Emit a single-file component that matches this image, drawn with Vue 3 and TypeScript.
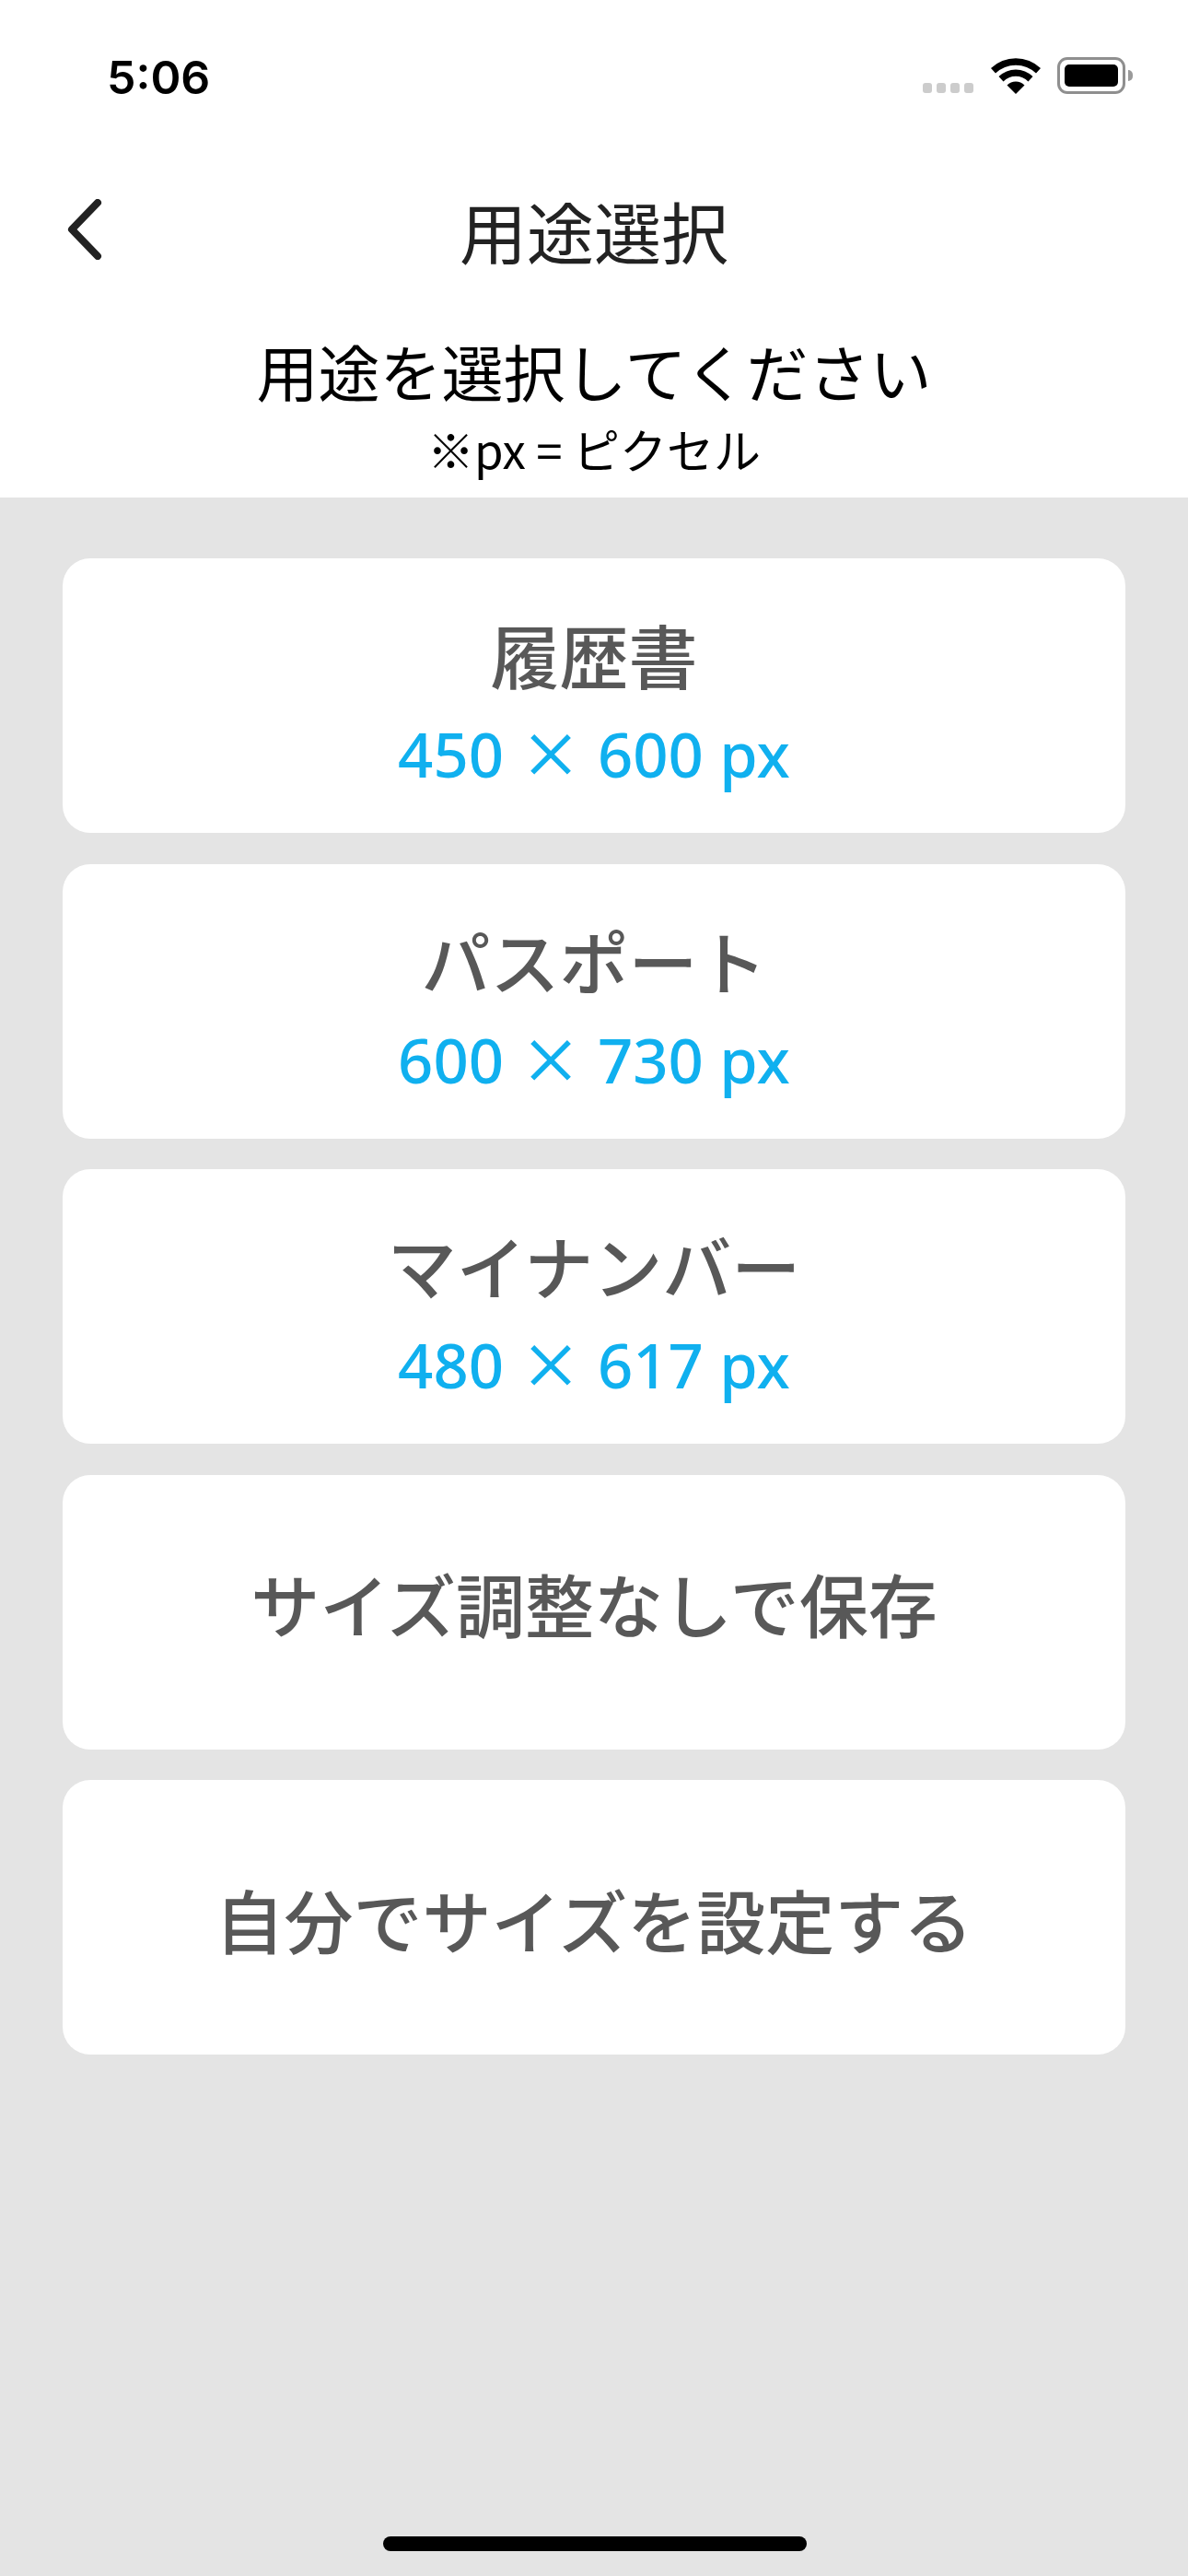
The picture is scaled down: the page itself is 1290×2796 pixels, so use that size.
<script setup lang="ts">
interface Purpose {
  label: string;
  width?: number;
  height?: number;
}

const purposes: Purpose[] = [
  { label: '履歴書', width: 450, height: 600 },
  { label: 'パスポート', width: 600, height: 730 },
  { label: 'マイナンバー', width: 480, height: 617 },
  { label: 'サイズ調整なしで保存' },
  { label: '自分でサイズを設定する' },
];
</script>

<template>
  <div class="screen">
    <header class="status">
      <span class="time">5:06</span>
      <div class="indicators">
        <div class="signal">
          <i v-for="n in 4" :key="n"></i>
        </div>
        <svg class="wifi" width="54" height="40" viewBox="0 0 54 40">
          <path d="M27 40 L17.5 30.5 A13.5 13.5 0 0 1 36.5 30.5 Z" />
          <path d="M13.5 26.5 L8.5 21 A26.5 26.5 0 0 1 45.5 21 L40.5 26.5 A19 19 0 0 0 13.5 26.5 Z" />
          <path d="M5 17.5 L0 12 A39 39 0 0 1 54 12 L49 17.5 A32 32 0 0 0 5 17.5 Z" />
        </svg>
        <div class="battery">
          <div class="battery-fill"></div>
        </div>
        <div class="battery-nub"></div>
      </div>
    </header>

    <nav class="nav">
      <button class="back" type="button" aria-label="戻る">
        <svg width="40" height="66" viewBox="0 0 40 66">
          <path d="M35 4 L7 33 L35 62" />
        </svg>
      </button>
      <h1>用途選択</h1>
    </nav>

    <section class="intro">
      <p class="lead">用途を選択してください</p>
      <p class="note">※px = ピクセル</p>
    </section>

    <main class="list">
      <button
        v-for="item in purposes"
        :key="item.label"
        class="card"
        :class="{ 'has-size': item.width }"
        type="button"
      >
        <span class="label">{{ item.label }}</span>
        <span v-if="item.width" class="size">
          {{ item.width }} <span class="times">×</span> {{ item.height }} px
        </span>
      </button>
    </main>

    <div class="home-bar"></div>
  </div>
</template>

<style>
html,
body {
  margin: 0;
  background: #fff;
}
</style>

<style scoped>
.screen {
  position: relative;
  display: flex;
  flex-direction: column;
  width: 1290px;
  height: 2796px;
  overflow: hidden;
  background: #fff;
  font-family: "Noto Sans CJK JP", "Noto Sans", sans-serif;
}

.status {
  display: flex;
  flex: none;
  justify-content: space-between;
  align-items: flex-start;
  height: 190px;
  padding: 52px 60px 0 116px;
  box-sizing: border-box;
}

.time {
  color: #000;
  font-family: "Inter", "Liberation Sans", sans-serif;
  font-size: 50px;
  font-weight: 600;
  line-height: 64px;
}

.indicators {
  display: flex;
  align-items: flex-start;
  margin-top: 10px;
}

.signal {
  display: flex;
  gap: 5px;
  margin-top: 28px;
  margin-right: 19px;
}

.signal i {
  width: 10px;
  height: 11px;
  border-radius: 3px;
  background: #ccc;
}

.wifi {
  margin-right: 18px;
  fill: #000;
}

.battery {
  width: 74px;
  height: 40px;
  padding: 5px;
  box-sizing: border-box;
  border: 3px solid #8f8f8f;
  border-radius: 11px;
}

.battery-fill {
  width: 100%;
  height: 100%;
  border-radius: 5px;
  background: #000;
}

.battery-nub {
  width: 5px;
  height: 12px;
  margin-top: 14px;
  margin-left: 3px;
  border-radius: 0 6px 6px 0;
  background: #9a9a9a;
}

.nav {
  position: relative;
  display: flex;
  flex: none;
  justify-content: center;
  height: 167px;
}

.back {
  position: absolute;
  top: 26px;
  left: 71px;
  padding: 0;
  border: 0;
  background: none;
}

.back svg {
  display: block;
  fill: none;
  stroke: #222;
  stroke-width: 8;
  stroke-linecap: round;
  stroke-linejoin: round;
}

h1 {
  margin: 0;
  color: #222;
  font-size: 73px;
  font-weight: 400;
  line-height: 100px;
  padding-top: 9px;
}

.intro {
  flex: none;
  height: 183px;
  text-align: center;
  color: #000;
}

.lead {
  margin: 0;
  font-size: 67px;
  line-height: 90px;
}

.note {
  margin: 5px 0 0;
  font-size: 51px;
  line-height: 70px;
}

.list {
  display: flex;
  flex: 1;
  flex-direction: column;
  gap: 33.5px;
  padding: 66px 68px 0;
  background: #e4e4e4;
}

.card {
  display: flex;
  flex: none;
  flex-direction: column;
  justify-content: center;
  align-items: center;
  height: 298px;
  padding: 0 0 19px;
  border: 0;
  border-radius: 30px;
  background: #fff;
  font-family: inherit;
}

.card.has-size {
  padding: 18px 0 0;
}

.card:last-child {
  padding: 3px 0 0;
}

.label {
  color: #585858;
  font-size: 75px;
  font-weight: 500;
  line-height: 100px;
}

.size {
  margin-top: 5px;
  color: #10b0ef;
  font-family: "Noto Sans", "Noto Sans CJK JP", sans-serif;
  font-size: 67px;
  font-weight: 500;
  line-height: 100px;
}

.times {
  font-family: "Noto Sans CJK JP", sans-serif;
  font-weight: 500;
}

.home-bar {
  position: absolute;
  bottom: 27px;
  left: 416px;
  width: 460px;
  height: 16px;
  border-radius: 8px;
  background: #000;
}
</style>
